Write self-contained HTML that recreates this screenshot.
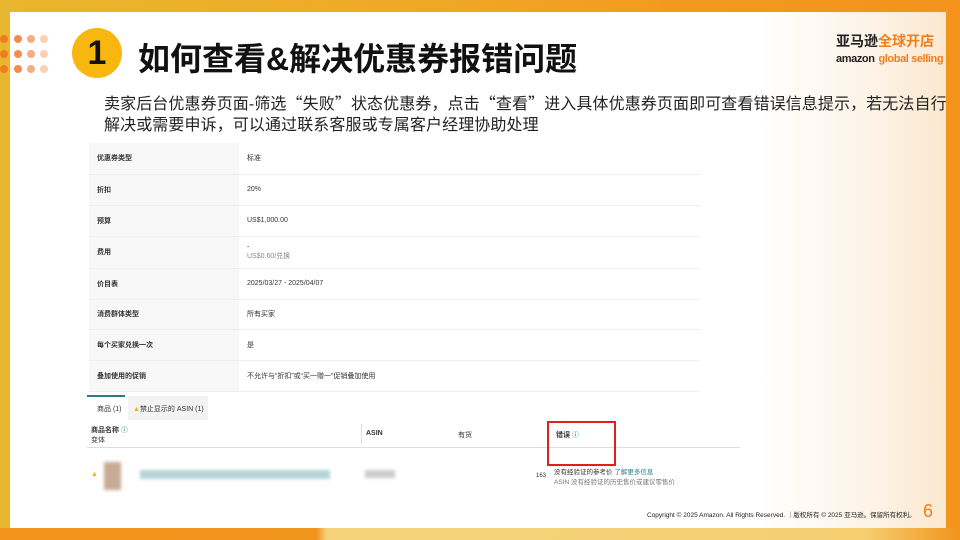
<!DOCTYPE html>
<html><head><meta charset="utf-8"><style>
*{margin:0;padding:0;box-sizing:border-box}
body{width:960px;height:540px;overflow:hidden;position:relative;font-family:"Liberation Sans","Noto Sans CJK SC",sans-serif;background:linear-gradient(90deg,#e9b62f 0%,#efa826 45%,#f29a1f 70%,#f3931c 100%)}
.bot{position:absolute;left:0;top:528px;width:960px;height:12px;background:linear-gradient(90deg,#f2931c 0%,#f2951d 33%,#f5d27a 34%,#f5cf72 90%,#f2951d 100%)}
.card{position:absolute;left:10px;top:12px;width:936px;height:516px;background:linear-gradient(90deg,#fff 0%,#fff 80%,#fdf3e6 92%,#fbe8cf 100%)}
.dots{position:absolute;left:0;top:35px}
.dot{position:absolute;width:8px;height:8px;border-radius:50%}
.num{position:absolute;left:72px;top:28px;width:50px;height:50px;border-radius:50%;background:#f7b70f;font:bold 34px "Liberation Sans",sans-serif;color:#111;text-align:center;line-height:50px}
h1{position:absolute;left:138px;top:34px;font-size:32px;font-weight:bold;color:#111;white-space:nowrap}
.desc{position:absolute;left:104px;top:92px;font-size:16px;line-height:21px;color:#222;white-space:nowrap;letter-spacing:0.1px}
.logo{position:absolute;left:836px;top:33px;font-size:14px;font-weight:bold;color:#222;line-height:16px;white-space:nowrap}
.logo .o{color:#f07d1a}
.logo .s{font-size:11px;letter-spacing:-0.4px;font-weight:bold}
table.t{position:absolute;left:89px;top:143px;width:611px;border-collapse:collapse;font-size:7px;color:#333}
table.t td{border-bottom:1px solid #eee;padding-left:8px;vertical-align:middle}
table.t td:first-child{background:#f8f8f8;width:150px;font-weight:bold}
.tab{position:absolute;font-size:7px;color:#333}
.red{position:absolute;left:547px;top:421px;width:69px;height:45px;border:2px solid #e02020}
.foot{position:absolute;left:647px;top:509px;font-size:6.5px;color:#222}
.pg{position:absolute;left:923px;top:501px;font-size:18px;color:#f07d1a}
.blur{position:absolute;filter:blur(1.5px)}
</style></head><body>
<div class="bot"></div>
<div class="card"></div>
<div class="dots">
<div class="dot" style="left:0;top:0;background:#f47a22"></div><div class="dot" style="left:14px;top:0;background:#f58c48"></div><div class="dot" style="left:27px;top:0;background:#f8ad80"></div><div class="dot" style="left:40px;top:0;background:#fbcfb4"></div>
<div class="dot" style="left:0;top:15px;background:#f47a22"></div><div class="dot" style="left:14px;top:15px;background:#f58c48"></div><div class="dot" style="left:27px;top:15px;background:#f8ad80"></div><div class="dot" style="left:40px;top:15px;background:#fbcfb4"></div>
<div class="dot" style="left:0;top:30px;background:#f47a22"></div><div class="dot" style="left:14px;top:30px;background:#f58c48"></div><div class="dot" style="left:27px;top:30px;background:#f8ad80"></div><div class="dot" style="left:40px;top:30px;background:#fbcfb4"></div>
</div>
<div class="num">1</div>
<h1>如何查看&amp;解决优惠券报错问题</h1>
<div class="logo">亚马逊<span class="o">全球开店</span><br><span class="s">amazon</span> <span class="s o">global selling</span></div>
<div class="desc">卖家后台优惠券页面-筛选<span style="font-family:'Noto Sans CJK SC'">“</span>失败<span style="font-family:'Noto Sans CJK SC'">”</span>状态优惠券，点击<span style="font-family:'Noto Sans CJK SC'">“</span>查看<span style="font-family:'Noto Sans CJK SC'">”</span>进入具体优惠券页面即可查看错误信息提示，若无法自行<br>解决或需要申诉，可以通过联系客服或专属客户经理协助处理</div>
<table class="t">
<tr style="height:31px"><td>优惠券类型</td><td>标准</td></tr>
<tr style="height:31px"><td>折扣</td><td>20%</td></tr>
<tr style="height:31px"><td>预算</td><td>US$1,000.00</td></tr>
<tr style="height:32px"><td>费用</td><td>-<br><span style="color:#888">US$0.60/兑换</span></td></tr>
<tr style="height:31px"><td>价目表</td><td>2025/03/27 - 2025/04/07</td></tr>
<tr style="height:30px"><td>消费群体类型</td><td>所有买家</td></tr>
<tr style="height:31px"><td>每个买家兑换一次</td><td>是</td></tr>
<tr style="height:31px"><td>叠加使用的促销</td><td>不允许与“折扣”或“买一赠一”促销叠加使用</td></tr>
</table>
<div style="position:absolute;left:87px;top:395px;width:38px;height:2px;background:#2a7a8a"></div>
<div class="tab" style="left:97px;top:404px">商品 (1)</div>
<div style="position:absolute;left:128px;top:396px;width:80px;height:24px;background:#f3f3f3"></div>
<div class="tab" style="left:133px;top:404px"><span style="color:#f2b400">▲</span>禁止显示的 ASIN (1)</div>
<div style="position:absolute;left:87px;top:420px;width:653px;height:28px;border-bottom:1px solid #ddd"></div>
<div class="tab" style="left:91px;top:425px;font-weight:bold">商品名称 <span style="color:#2a9a9a">ⓘ</span><br><span style="font-weight:normal">变体</span></div>
<div style="position:absolute;left:361px;top:424px;width:1px;height:20px;background:#ddd"></div>
<div class="tab" style="left:366px;top:430px;font-weight:bold">ASIN</div>
<div class="tab" style="left:458px;top:430px">有货</div>
<div class="tab" style="left:556px;top:430px;font-weight:bold">错误 <span style="color:#2a9a9a">ⓘ</span></div>
<div class="red"></div>
<div class="tab" style="left:91px;top:471px;color:#f2b400">▲</div>
<div class="blur" style="left:104px;top:462px;width:17px;height:28px;background:#c8ab95"></div>
<div class="blur" style="left:140px;top:470px;width:190px;height:9px;background:#b5d3d8"></div>
<div class="blur" style="left:365px;top:470px;width:30px;height:8px;background:#ccc"></div>
<div class="tab" style="left:536px;top:473px;font-size:6px">163</div>
<div class="tab" style="left:554px;top:466px;font-size:6.5px">没有经验证的参考价 <span style="color:#2a7a8a">了解更多信息</span><br><span style="color:#777">ASIN 没有经验证的历史售价或建议零售价</span></div>
<div class="foot">Copyright © 2025 Amazon. All Rights Reserved. ｜版权所有 © 2025 亚马逊。保留所有权利。</div>
<div class="pg">6</div>
</body></html>
